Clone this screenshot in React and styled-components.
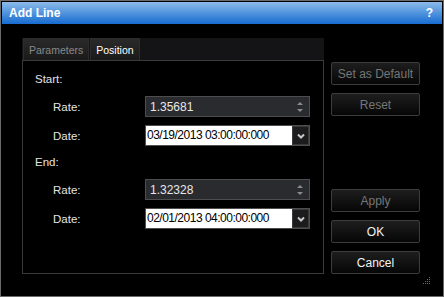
import React from "react";
import styled, { createGlobalStyle } from "styled-components";

const GlobalStyle = createGlobalStyle`
  body {
    margin: 0;
    background: #000;
    font-family: "Liberation Sans", Arial, sans-serif;
  }
`;

// Dialog frame
const Window = styled.div`
  position: relative;
  width: 444px;
  height: 297px;
  box-sizing: border-box;
  border: 1px solid #6b6b6b;
  padding: 1px;
  background: #000;
  display: flex;
  flex-direction: column;
`;

const TitleBar = styled.div`
  height: 22px;
  display: flex;
  align-items: center;
  justify-content: space-between;
  padding: 0 9px 0 7px;
  background: linear-gradient(#8dbbe9, #4a90dc 55%, #176bd0);
  color: #fff;
  font-size: 12px;
  font-weight: bold;
`;

const Body = styled.div`
  display: flex;
  gap: 7px;
  margin: 14px 0 0 20px;
`;

const TabArea = styled.div`
  width: 302px;
  display: flex;
  flex-direction: column;
`;

const TabStrip = styled.div`
  height: 22px;
  display: flex;
  gap: 1px;
  padding-left: 1px;
  background: #141417;
`;

const Tab = styled.div`
  display: flex;
  align-items: center;
  padding: 0 5px;
  border: 1px solid #2c2c2c;
  border-bottom: none;
  background: linear-gradient(#2a2a2a, #1a1a1a);
  color: ${(props) => (props.active ? "#fff" : "#8a8a8a")};
  font-size: 10.5px;
`;

const Panel = styled.div`
  height: 214px;
  box-sizing: border-box;
  border: 1px solid #3a3a3a;
  padding: 11px 0 0 12px;
  display: flex;
  flex-direction: column;
`;

const SectionLabel = styled.div`
  height: 14px;
  line-height: 14px;
  color: #e4e4e4;
  font-size: 11.5px;
  margin-top: ${(props) => props.top || 0}px;
`;

const Row = styled.div`
  display: flex;
  align-items: center;
  margin-top: ${(props) => props.top}px;
  padding-left: 18px;
`;

const RowLabel = styled.div`
  width: 92px;
  color: #e4e4e4;
  font-size: 11.5px;
`;

const SpinField = styled.div`
  width: 165px;
  height: 21px;
  box-sizing: border-box;
  border: 1px solid #4d4d4d;
  background: #2a2b2f;
  display: flex;
  align-items: center;
  justify-content: space-between;
  padding: 0 6px 0 4px;
  color: #e8e8e8;
  font-size: 12px;
`;

const Arrows = styled.div`
  display: flex;
  flex-direction: column;
  gap: 4px;
`;

const Arrow = styled.div`
  width: 0;
  height: 0;
  border-left: 3px solid transparent;
  border-right: 3px solid transparent;
  ${(props) =>
    props.up
      ? "border-bottom: 3px solid #8a8a8a;"
      : "border-top: 3px solid #8a8a8a;"}
`;

const DateField = styled.div`
  width: 165px;
  height: 21px;
  box-sizing: border-box;
  border: 1px solid #4d4d4d;
  display: flex;
`;

const DateText = styled.div`
  flex: 1;
  background: #fff;
  color: #000;
  font-size: 12px;
  letter-spacing: -0.5px;
  line-height: 19px;
  padding-left: 1px;
`;

const DropButton = styled.div`
  width: 17px;
  box-sizing: border-box;
  border: 1px solid #3a3a3a;
  background: #1c1c1e;
  display: flex;
  align-items: center;
  justify-content: center;
`;

const ButtonColumn = styled.div`
  width: 89px;
  display: flex;
  flex-direction: column;
  gap: 8px;
  padding-top: 24px;
`;

const Spacer = styled.div`
  flex: 1;
`;

const Button = styled.div`
  height: 23px;
  box-sizing: border-box;
  border: 1px solid #3c3c3c;
  border-radius: 2px;
  background: linear-gradient(#1e1e1e, #060606);
  display: flex;
  align-items: center;
  justify-content: center;
  color: ${(props) => (props.disabled ? "#767676" : "#f2f2f2")};
  font-size: 12px;
`;

const Grip = styled.svg`
  position: absolute;
  right: 12px;
  bottom: 11px;
`;

const Chevron = () => (
  <svg width="8" height="6" viewBox="0 0 8 6">
    <path d="M1 1.5 L4 4.5 L7 1.5" stroke="#c8c8c8" strokeWidth="2" fill="none" />
  </svg>
);

const Spin = ({ value }) => (
  <SpinField>
    <span>{value}</span>
    <Arrows>
      <Arrow up />
      <Arrow />
    </Arrows>
  </SpinField>
);

const DatePicker = ({ value }) => (
  <DateField>
    <DateText>{value}</DateText>
    <DropButton>
      <Chevron />
    </DropButton>
  </DateField>
);

const App = () => (
  <>
    <GlobalStyle />
    <Window>
      <TitleBar>
        <span>Add Line</span>
        <span>?</span>
      </TitleBar>
      <Body>
        <TabArea>
          <TabStrip>
            <Tab>Parameters</Tab>
            <Tab active>Position</Tab>
          </TabStrip>
          <Panel>
            <SectionLabel>Start:</SectionLabel>
            <Row top={10}>
              <RowLabel>Rate:</RowLabel>
              <Spin value="1.35681" />
            </Row>
            <Row top={8}>
              <RowLabel>Date:</RowLabel>
              <DatePicker value="03/19/2013 03:00:00:000" />
            </Row>
            <SectionLabel top={9}>End:</SectionLabel>
            <Row top={10}>
              <RowLabel>Rate:</RowLabel>
              <Spin value="1.32328" />
            </Row>
            <Row top={8}>
              <RowLabel>Date:</RowLabel>
              <DatePicker value="02/01/2013 04:00:00:000" />
            </Row>
          </Panel>
        </TabArea>
        <ButtonColumn>
          <Button disabled>Set as Default</Button>
          <Button disabled>Reset</Button>
          <Spacer />
          <Button disabled>Apply</Button>
          <Button>OK</Button>
          <Button>Cancel</Button>
        </ButtonColumn>
      </Body>
      <Grip width="8" height="8" viewBox="0 0 8 8">
        <g fill="#6a6a6a">
          <rect x="6" y="0" width="1" height="1" />
          <rect x="4" y="2" width="1" height="1" />
          <rect x="6" y="2" width="1" height="1" />
          <rect x="2" y="4" width="1" height="1" />
          <rect x="4" y="4" width="1" height="1" />
          <rect x="6" y="4" width="1" height="1" />
          <rect x="0" y="6" width="1" height="1" />
          <rect x="2" y="6" width="1" height="1" />
          <rect x="4" y="6" width="1" height="1" />
          <rect x="6" y="6" width="1" height="1" />
        </g>
      </Grip>
    </Window>
  </>
);

export default App;
